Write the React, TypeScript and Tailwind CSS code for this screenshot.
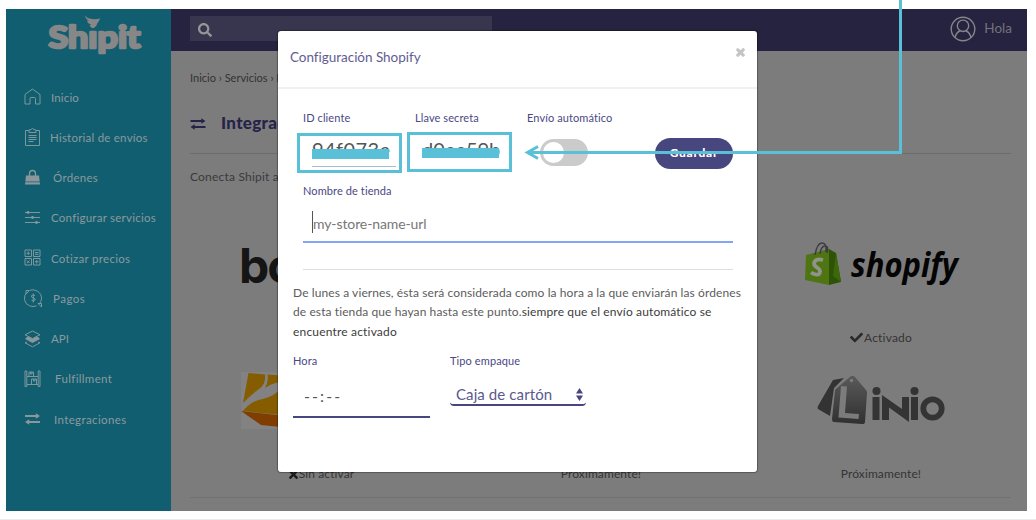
import React from "react";
import { FaSearch, FaCheck, FaTimes } from "react-icons/fa";

const stroke = { fill: "none", stroke: "#7d989d", strokeWidth: 1 };

function Swap({ className }: { className: string }) {
  return (
    <svg viewBox="0 0 16 12" className={className} fill="currentColor">
      <path d="M.5 2.100h10.800V.200L15.500 3l-4.200 2.800V3.900H.500zM15.500 8.100H4.700V6.200L.500 9l4.200 2.800V9.900h10.800z" />
    </svg>
  );
}

const icons: Record<string, React.ReactNode> = {
  home: <path {...stroke} d="M1 6.500 8.500 1l7.500 5.500V16h-4.500V10.500a1 1 0 0 0-1-1H7a1 1 0 0 0-1 1V16H1z" />,
  list: (
    <g {...stroke}>
      <path d="M5 2.500H1.500v15h14v-15H12M5 4.500V2l2-.5Q8.500-.5 10 1.500l2 .5v2.500z" />
      <path d="M4.500 7.500h8M4.500 9.500h8M4.500 11.500h8M4.500 13.500h5" />
    </g>
  ),
  bag: (
    <g>
      <path fill="#8b979a" d="M2 6.500h13l.7 6H1.300zM1.200 13.200h14.600l.2 2.300H1z" />
      <path fill="none" stroke="#8b979a" strokeWidth="1.300" d="M5.500 9V4.500a3 3 0 0 1 6 0V9" />
    </g>
  ),
  sliders: (
    <g {...stroke}>
      <path d="M1 3.500h15M1 8.500h15M1 13.500h15" />
      <g fill="#8b979a" stroke="none">
        <circle cx="4" cy="3.500" r="1.400" />
        <circle cx="8.500" cy="8.500" r="1.400" />
        <circle cx="12.500" cy="13.500" r="1.400" />
      </g>
    </g>
  ),
  calc: (
    <g {...stroke}>
      <path d="M1 1h6.500v6.500H1zM9.500 1H16v6.500H9.500zM1 9.500h6.500V16H1zM9.500 9.500H16V16H9.500z" />
      <path d="M2.500 4.250h3.500M4.250 2.500V6M11 3.500h3.500M11 5.300h3.500M3 11.500l2.500 2.500M5.500 11.500 3 14M11 12.750h3.500M12.750 11v3.500" />
    </g>
  ),
  money: (
    <g {...stroke}>
      <path d="M3.500 3A8 8 0 0 0 5.500 16.800M15.500 14.500A8 8 0 0 0 12 1.600M6 1.200a8 8 0 0 1 6 .4M5.500 16.800q3.500 1.500 7 0M2 1.500h3.500L2 5zM17.500 14.500H14l3.500 3.500z" />
      <path d="M11 6.700Q9 5 7.700 6.500T9.400 9t1.300 2.300T7.500 11.200M9.300 4.500v9" />
    </g>
  ),
  layers: (
    <g>
      <path {...stroke} d="M8.500 1 16 4.800 8.500 8.600 1 4.800zM3 12l-2 .8 7.500 4 7.500-4-2-.8" />
      <path fill="#8b979a" d="m1.500 8 3-1.500 4 2.200 4-2.200 3 1.500v1.200l-7 3.800-7-3.800z" />
    </g>
  ),
  rack: (
    <g {...stroke}>
      <path d="M1 1h1.800v15.500H1zM14.200 1H16v15.500h-1.800zM3 6.500h11M3 14.500h11M5 6.500V2h4.500v4.500M7.500 9h5v5.500M7.500 9v5.500M6.500 2v2h1.500V2M9.500 9v2H11V9" />
    </g>
  ),
};

const nav = [
  { icon: "home", label: "Inicio", cls: "ml-[10px] tracking-[0.15px]" },
  { icon: "list", label: "Historial de envíos", cls: "ml-[9px] tracking-[0.23px]" },
  { icon: "bag", label: "Órdenes", cls: "ml-[12px] tracking-[0.3px]" },
  { icon: "sliders", label: "Configurar servicios", cls: "ml-[10px] tracking-[0.25px]" },
  { icon: "calc", label: "Cotizar precios", cls: "ml-[10px] tracking-[0.3px]" },
  { icon: "money", label: "Pagos", cls: "ml-[12px] tracking-[0.5px]" },
  { icon: "layers", label: "API", cls: "ml-[10px] tracking-[0px]" },
  { icon: "rack", label: "Fulfillment", cls: "ml-[14px] tracking-[0.35px]" },
  { icon: "swap", label: "Integraciones", cls: "ml-[13px] tracking-[0.37px]" },
];

function Sidebar() {
  return (
    <aside className="w-[165px] shrink-0 bg-[#115e70] text-[#8a9a9e]">
      <svg viewBox="0 0 165 68" className="block h-[68px] w-[165px] overflow-visible">
        <text x="42.500" y="39" fontSize="31" fontWeight="700" fontFamily="Lato, sans-serif" textLength="92" lengthAdjust="spacingAndGlyphs" fill="#878787" stroke="#878787" strokeWidth="2.600" strokeLinejoin="round">
          Shıpit
        </text>
        <path fill="#878787" d="M79 6.500q2 3 7 3.500 5 .5 8-.8-1 3.500-2.500 4.800-.5 3-4 5.200-3-.2-4-3.200 1 0 2-.7-4-.3-4.500-3.800l2 .3Q79.500 10 79 6.500z" />
      </svg>
      <nav className="flex flex-col">
        {nav.map((n) => (
          <a key={n.label} className="flex h-[40.250px] items-center pl-[18px]">
            {n.icon === "swap" ? (
              <Swap className="h-3 w-[17px] text-[#8b979a]" />
            ) : (
              <svg viewBox="0 0 18 18" className="-mr-px h-[18px] w-[18px] overflow-visible">{icons[n.icon]}</svg>
            )}
            <span className={"whitespace-nowrap text-[11.500px] " + n.cls}>{n.label}</span>
          </a>
        ))}
      </nav>
    </aside>
  );
}

function Header() {
  return (
    <header className="flex h-[42px] items-center justify-between bg-[#25233f] pl-[19px] pr-[15px]">
      <div className="-mt-[3px] flex h-[25px] w-[302px] items-center bg-[#38364f] pl-2">
        <FaSearch className="mt-[2px] h-[14px] w-[14px] text-[#979797]" />
      </div>
      <div className="-mt-[3px] flex items-center gap-2">
        <svg viewBox="0 0 26 26" className="h-[26px] w-[26px]" fill="none" stroke="#85858a" strokeWidth="1.400">
          <circle cx="13" cy="13" r="11.800" />
          <circle cx="13" cy="9.800" r="5.700" />
          <path d="M5 21.500q1.500-5.500 5-6.500M21 21.500q-1.500-5.500-5-6.500" />
        </svg>
        <span className="text-[13.500px] text-[#73727c]">Hola</span>
      </div>
    </header>
  );
}

function ShopifyLogo() {
  return (
    <svg viewBox="0 0 160 48" className="h-12 w-40 overflow-visible">
      <path d="M5 15 28 9v36L4 40z" fill="#4f7512" />
      <path d="m28 9 7 4 5 29-12 3z" fill="#2f5306" />
      <path d="m35 13 5 29-8-6z" fill="#3d680a" />
      <path d="M14 15Q16 3 21 3t4 9M19 14q1-8 5-8t2 7" fill="none" stroke="#3c3b41" strokeWidth="1.500" />
      <path d="M22 20q-8-2-9 3.500c0 4 6 4 6 8 0 5-6 3-9 1" fill="none" stroke="#8f938b" strokeWidth="3.800" />
      <text x="50" y="37" fontSize="34" fontWeight="700" fontStyle="italic" fontFamily="'Open Sans', sans-serif" textLength="107" lengthAdjust="spacingAndGlyphs" fill="#040404">
        shopify
      </text>
    </svg>
  );
}

function LinioLogo() {
  return (
    <svg viewBox="0 0 128 50" className="h-[50px] w-32">
      <defs>
        <linearGradient id="tag" x1="0" y1="0" x2="0" y2="1">
          <stop offset="0" stopColor="#5a5a5a" />
          <stop offset="1" stopColor="#303030" />
        </linearGradient>
      </defs>
      <path d="M16 4 27 2 17 12l-4 28L1 33q-1-1 0-3z" fill="#333" />
      <path d="M34 0q2-1 4 1l11 13q1 1 1 3l-2 29q0 2-3 2l-28-2q-2 0-2-3l3-28q0-2 2-3z" fill="url(#tag)" />
      <circle cx="34.500" cy="4.500" r="1.700" fill="#7c7c7c" />
      <path d="m24 10 6 .5-2 26.500 14 1-.5 5-20-1.500z" fill="#7c7c7c" />
      <g fill="#343434">
        <circle cx="59.500" cy="15" r="4" />
        <path d="M55.500 21h7v23h-7zM65 19l20 14V21h7v25L72 31.500V44h-7zM94 21h7v23h-7z" />
        <circle cx="97.500" cy="15" r="4" />
      </g>
      <circle cx="115.500" cy="32.500" r="9.200" fill="none" stroke="#343434" strokeWidth="5.800" />
    </svg>
  );
}

function ParcelLogo() {
  return (
    <svg viewBox="0 0 160 58" className="h-[58px] w-40">
      <path d="M0 0h160v57H0z" fill="#828282" />
      <path d="M7.500 1 24 2.500q1 8-4 13Q12 21 2 31z" fill="#855c00" />
      <path d="m26.500 2.500 13.500 1V10q-9 1-16 6 4-7 2.500-13.500zM40 16v27L2 39q9-11 20-12 12-3 18-11z" fill="#855c00" />
      <path d="m0 39 40 4.500V55l-20-2z" fill="#803d00" />
    </svg>
  );
}

function Services() {
  return (
    <div className="-ml-[9px] grid w-[840px] grid-cols-[280px_280px_280px] justify-items-center text-[12px] text-[#343434]">
      <div className="flex h-[74px] w-40 items-center pt-[6px]">
        <svg viewBox="0 0 160 60" className="h-[60px] w-40 overflow-visible">
          <text x="-2" y="46" fontSize="48" fontWeight="700" fontFamily="Inter, sans-serif" letterSpacing="-2" fill="#151515">
            bo
          </text>
        </svg>
      </div>
      <div />
      <div className="flex h-[74px] items-center"><ShopifyLogo /></div>
      <div className="h-[61px]" />
      <div />
      <div className="flex h-[61px] items-center pt-[12px]">
        <FaCheck className="h-[13px] w-[13px] text-[#2b2b2b]" />
        <span className="ml-px tracking-[0.2px]">Activado</span>
      </div>
      <div className="flex h-[74px] items-center pt-[3px]"><ParcelLogo /></div>
      <div />
      <div className="flex h-[74px] items-center pt-[3px]"><LinioLogo /></div>
      <div className="flex h-[61px] items-center pt-[15px]">
        <FaTimes className="h-[13px] w-[11px] text-[#1c1c1c]" />
        <span className="tracking-[0.1px]">Sin activar</span>
      </div>
      <div className="flex h-[61px] items-center pt-[15px] tracking-[0.1px]">Próximamente!</div>
      <div className="flex h-[61px] items-center pt-[15px] tracking-[0.1px]">Próximamente!</div>
    </div>
  );
}

function Field({ label, children, className }: { label: string; children?: React.ReactNode; className: string }) {
  return (
    <div className={className}>
      <div className="h-4 whitespace-nowrap text-[11px] leading-4 tracking-[0.1px] text-[#4a4884]">{label}</div>
      {children}
    </div>
  );
}

function Modal() {
  return (
    <div className="absolute left-[278px] top-[31px] flex h-[441px] w-[479px] flex-col rounded-[3px] bg-white shadow-[0_0_1px_1px_rgba(0,0,0,0.3)]">
      <div className="flex h-[58px] shrink-0 items-center justify-between border-b-2 border-[#f0f0f0] pb-[4px] pl-3 pr-[12px]">
        <h2 className="text-[13.500px] tracking-[-0.03px] text-[#5f5d92]">Configuración Shopify</h2>
        <FaTimes className="-mt-[9px] h-[11px] w-[9px] text-[#c4c4c4]" stroke="currentColor" strokeWidth="50" />
      </div>
      <div className="flex h-[94px] shrink-0 items-start pl-[25px] pt-[21px]">
        <Field label="ID cliente" className="w-28">
          <div className="-ml-[6px] mt-[7px] flex h-[40px] w-[105px] border-[3px] border-[#5ac0d8] pl-3">
            <div className="relative h-[31px] w-[84px] border-b border-[#a8bccb] text-[20px] leading-[26px] tracking-[0.4px] text-[#555]">
              94f073e
              <div className="absolute left-0 top-[13px] h-[10px] w-[77px] bg-[#5ac0d8]" />
            </div>
          </div>
        </Field>
        <Field label="Llave secreta" className="w-28">
          <div className="-ml-2 mt-[6px] flex h-[40px] w-[105px] border-[3px] border-[#5ac0d8] pl-3">
            <div className="relative h-[31px] w-[77px] whitespace-nowrap text-[20px] leading-[28px] text-[#555]">
              d0ee59b
              <div className="absolute inset-x-0 top-[13px] h-[10px] bg-[#5ac0d8]" />
            </div>
          </div>
        </Field>
        <Field label="Envío automático" className="w-[128px]">
          <div className="ml-[13px] mt-[13px] flex h-[27px] w-12 items-center rounded-full bg-[#cbcbcb] pl-[3px]">
            <div className="h-[21px] w-[21px] rounded-full bg-white" />
          </div>
        </Field>
        <button className="mt-[28px] h-[31px] w-[78px] rounded-full bg-[#48467f] pb-[2px] text-[12px] font-black tracking-[0.7px] text-white">Guardar</button>
      </div>
      <Field label="Nombre de tienda" className="mx-[25px] h-[87px] w-[430px] shrink-0 border-b border-[#dedede]">
        <div className="mt-[2px] flex h-[42px] items-center border-b-2 border-[#86a4f7] pl-[9px] pt-[4px]">
          <div className="-mt-[2px] h-[22px] w-px bg-[#555]" />
          <span className="text-[14px] tracking-[-0.1px] text-[#777]">my-store-name-url</span>
        </div>
      </Field>
      <p className="ml-[15px] mt-[13px] h-[58px] shrink-0 whitespace-nowrap text-[12px] leading-[19.300px] tracking-[0.1px] text-[#5c5c5c]">
        De lunes a viernes, ésta será considerada como la hora a la que enviarán las órdenes
        <br />
        de esta tienda que hayan hasta este punto.<span className="tracking-[0.14px] text-[#3c3c3c]">siempre que el envío automático se</span>
        <br />
        <span className="tracking-[0.18px] text-[#3c3c3c]">encuentre activado</span>
      </p>
      <div className="mt-[12px] flex pl-[15px]">
        <Field label="Hora" className="w-[157px]">
          <div className="flex h-[49px] w-[137px] items-center border-b-2 border-[#48467f] pl-[11px] pt-[6px] text-[16px] tracking-[2.100px] text-[#555]">--:--</div>
        </Field>
        <Field label="Tipo empaque" className="w-[136px]">
          <div className="mt-[14px] flex h-[23px] items-center justify-between rounded-[4px] border-b-2 border-[#48467f] pl-[6px] pr-[3px] pt-[2px]">
            <span className="text-[15px] tracking-[0.1px] text-[#5b598f]">Caja de cartón</span>
            <svg viewBox="0 0 7 13" className="h-[13px] w-[7px]" fill="#48467f">
              <path d="M3.500 0 7 5.500H0zM0 7.500h7L3.500 13z" />
            </svg>
          </div>
        </Field>
      </div>
    </div>
  );
}

export default function App() {
  return (
    <div className="relative h-[520px] w-[1036px] overflow-hidden border-b border-[#ececec] bg-white pl-[6px] pt-[9px] font-['Lato',sans-serif]">
      <div className="flex h-[502px] w-[1021px] overflow-hidden bg-[#7c7c7c]">
        <Sidebar />
        <main className="flex min-w-0 flex-1 flex-col">
          <Header />
          <div className="flex flex-1 flex-col overflow-hidden pl-[19px]">
            <div className="mt-[19px] h-4 whitespace-nowrap text-[11px] leading-4 text-[#333]">Inicio › Servicios › Integraciones</div>
            <div className="mt-[19px] flex h-[49px] w-[821px] items-start border-b border-[#6c6c6c] pt-[6px] text-[#25234a]">
              <Swap className="mt-[7px] h-3 w-4" />
              <h1 className="ml-[15px] text-[17px] font-black leading-6 tracking-[0.3px]">Integraciones</h1>
            </div>
            <p className="mt-[13px] h-5 text-[12px] leading-5 tracking-[0.2px] text-[#3a3a3a]">Conecta Shipit a</p>
            <div className="mt-[40px]">
              <Services />
            </div>
            <div className="w-[821px] border-b border-[#717171]" />
          </div>
        </main>
      </div>
      <Modal />
      <svg className="pointer-events-none absolute left-0 top-0 h-[520px] w-[1036px]" viewBox="0 0 1036 520" fill="none" stroke="#5ac0d8" strokeWidth="3">
        <path d="M900.500 0v153M902 152.500H528" />
        <path d="M538 146.500 527.500 152.500l10.500 6" />
      </svg>
    </div>
  );
}
